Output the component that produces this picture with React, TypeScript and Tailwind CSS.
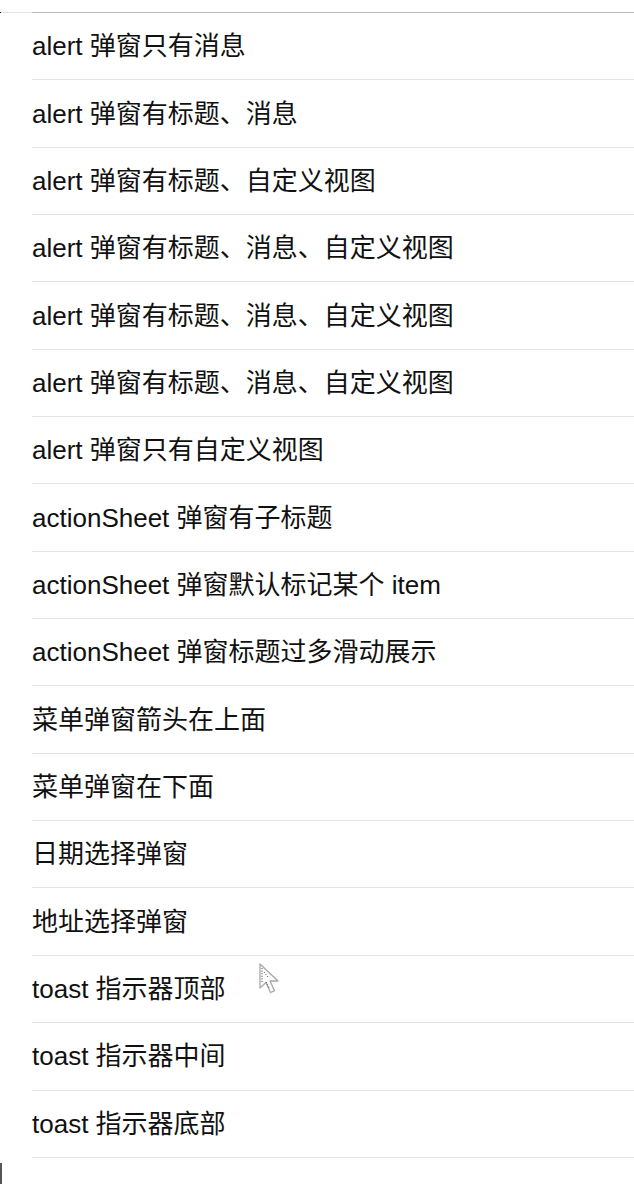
const items = [
  "alert 弹窗只有消息",
  "alert 弹窗有标题、消息",
  "alert 弹窗有标题、自定义视图",
  "alert 弹窗有标题、消息、自定义视图",
  "alert 弹窗有标题、消息、自定义视图",
  "alert 弹窗有标题、消息、自定义视图",
  "alert 弹窗只有自定义视图",
  "actionSheet 弹窗有子标题",
  "actionSheet 弹窗默认标记某个 item",
  "actionSheet 弹窗标题过多滑动展示",
  "菜单弹窗箭头在上面",
  "菜单弹窗在下面",
  "日期选择弹窗",
  "地址选择弹窗",
  "toast 指示器顶部",
  "toast 指示器中间",
  "toast 指示器底部",
];

// mouse pointer captured in the screenshot
function Cursor() {
  return (
    <svg
      className="absolute left-[257px] top-[962px]"
      width="28"
      height="36"
      viewBox="0 0 28 36"
    >
      <path
        d="M3 2 L3 26 L9 20.5 L13.5 30.5 L17.5 28.8 L13 19 L21 19 Z"
        fill="#fbfbfb"
        stroke="#a8a8a8"
        strokeWidth="1.3"
        strokeLinejoin="round"
      />
      <path
        d="M5 6 L5 21 M7 10 L11 15 M9 20 L12.5 27"
        stroke="#444"
        strokeWidth="1"
        strokeDasharray="1 1.6"
      />
    </svg>
  );
}

export default function App() {
  return (
    <div
      className="relative w-[634px] h-[1184px] bg-white overflow-hidden text-[#111]"
      style={{ fontFamily: '"Liberation Sans", "Noto Sans CJK SC", sans-serif' }}
    >
      {/* top edge */}
      <div className="h-3" />
      <div className="flex h-px">
        <div className="w-px bg-black" />
        <div className="w-[31px] bg-[#e4e4e4]" />
        <div className="flex-1 bg-[#b8b8b8]" />
      </div>

      <ul className="flex flex-col">
        {items.map((label, i) => (
          <li key={i} className="pl-8">
            <div className="h-[67.35px] flex items-center border-b border-[#e4e4e4] text-[26px] leading-none">
              {label}
            </div>
          </li>
        ))}
      </ul>

      {/* stray mark bottom-left */}
      <div className="flex-1 mt-[5px] w-[2px] h-[21px] bg-[#555]" />

      <Cursor />
    </div>
  );
}
